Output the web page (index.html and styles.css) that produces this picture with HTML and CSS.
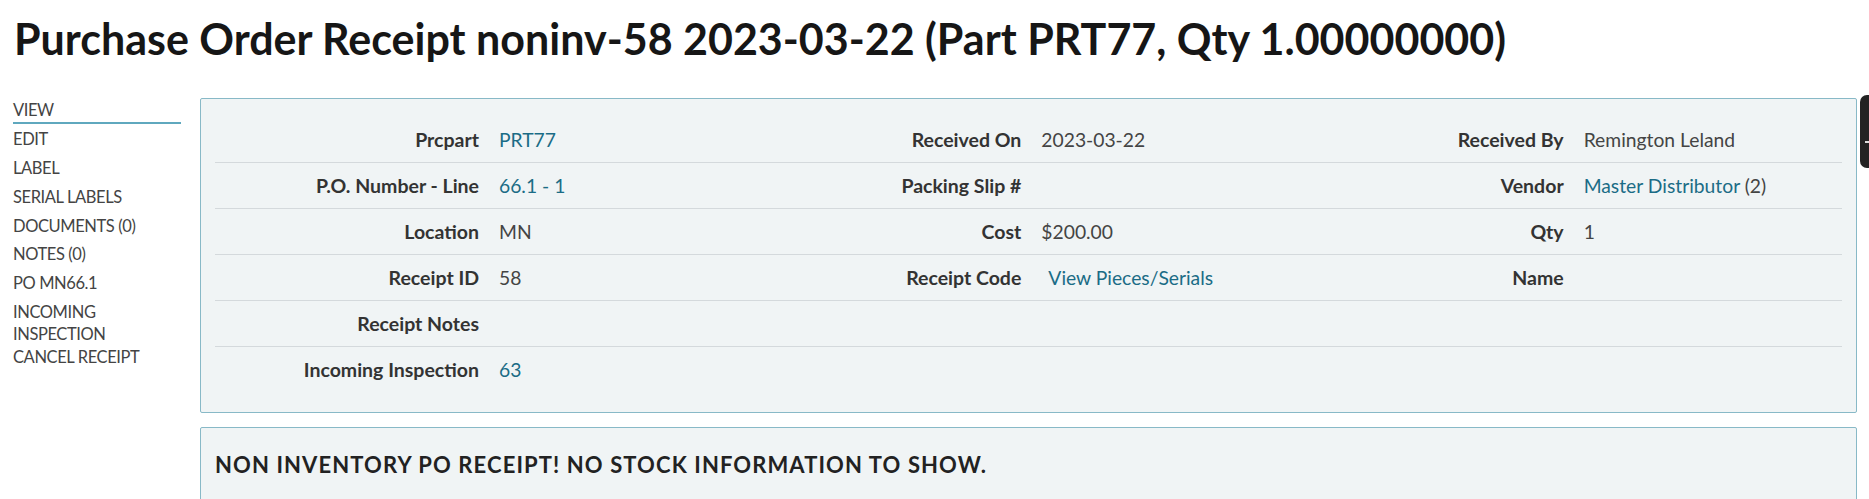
FILE: index.html
```html
<!DOCTYPE html>
<html lang="en">
<head>
    <meta charset="UTF-8">
    <title>Purchase Order Receipt noninv-58</title>
    <link rel="stylesheet" href="styles.css">
</head>
<body>
    <h1 class="page-title">Purchase Order Receipt noninv-58 2023-03-22 (Part PRT77, Qty 1.00000000)</h1>

    <div class="layout">
        <ul class="side-nav">
            <li class="active"><a href="#">View</a></li>
            <li><a href="#">Edit</a></li>
            <li><a href="#">Label</a></li>
            <li><a href="#">Serial Labels</a></li>
            <li><a href="#">Documents (0)</a></li>
            <li><a href="#">Notes (0)</a></li>
            <li><a href="#">PO MN66.1</a></li>
            <li class="wrap"><a href="#">Incoming Inspection</a></li>
            <li><a href="#">Cancel Receipt</a></li>
        </ul>

        <div class="content">
            <div class="panel">
                <table class="details">
                    <colgroup>
                        <col class="lbl"><col class="val">
                        <col class="lbl"><col class="val">
                        <col class="lbl"><col class="val">
                    </colgroup>
                    <tr>
                        <th>Prcpart</th><td><a href="#">PRT77</a></td>
                        <th>Received On</th><td>2023-03-22</td>
                        <th>Received By</th><td>Remington Leland</td>
                    </tr>
                    <tr>
                        <th>P.O. Number - Line</th><td><a href="#">66.1 - 1</a></td>
                        <th>Packing Slip #</th><td></td>
                        <th>Vendor</th><td><a href="#">Master Distributor</a> (2)</td>
                    </tr>
                    <tr>
                        <th>Location</th><td>MN</td>
                        <th>Cost</th><td>$200.00</td>
                        <th>Qty</th><td>1</td>
                    </tr>
                    <tr>
                        <th>Receipt ID</th><td>58</td>
                        <th>Receipt Code</th><td><a class="pieces" href="#">View Pieces/Serials</a></td>
                        <th>Name</th><td></td>
                    </tr>
                    <tr>
                        <th>Receipt Notes</th><td></td>
                        <th></th><td></td>
                        <th></th><td></td>
                    </tr>
                    <tr>
                        <th>Incoming Inspection</th><td><a href="#">63</a></td>
                        <th></th><td></td>
                        <th></th><td></td>
                    </tr>
                </table>
            </div>

            <div class="panel notice">
                <h3>Non Inventory PO Receipt! No stock information to show.</h3>
            </div>
        </div>
    </div>

    <div class="side-tab"><span></span></div>
</body>
</html>
```

FILE: styles.css
```css
body {
    font-family: 'Lato', 'Liberation Sans', sans-serif;
    color: #333;
    background: #fff;
    margin: 0;
    padding: 0 12px 0 13px;
    overflow: hidden;
}

a {
    color: #1b6c86;
    text-decoration: none;
}

.page-title {
    font-size: 43px;
    font-weight: 700;
    line-height: 52px;
    color: #161616;
    margin: 13px 0 33px 1px;
}

.layout {
    display: flex;
    align-items: flex-start;
}

/* left menu */
.side-nav {
    list-style: none;
    margin: 0;
    padding: 1px 0 0;
    width: 168px;
    flex-shrink: 0;
    margin-right: 19px;
}

.side-nav li {
    font-size: 16.5px;
    line-height: 22px;
    letter-spacing: -0.4px;
    text-transform: uppercase;
    padding-bottom: 1px;
    border-bottom: 2px solid transparent;
    margin-bottom: 3.9px;
}

.side-nav li a {
    color: #444;
}

.side-nav li.active {
    border-bottom-color: #5fa8be;
}

.side-nav li.wrap {
    width: 120px;
    margin-bottom: -2px;
}

.content {
    flex: 1;
}

.panel {
    background: #f0f4f5;
    border: 1px solid #88b9c7;
    border-radius: 2px;
    padding: 18px 14px 20px;
}

.details {
    width: 100%;
    border-collapse: collapse;
    table-layout: fixed;
}

.details col.lbl {
    width: 274px;
}

.details tr + tr th,
.details tr + tr td {
    border-top: 1px solid #d4d9dc;
}

.details th,
.details td {
    height: 45px;
    padding: 0 10px;
    vertical-align: middle;
}

.details th {
    text-align: right;
    font-size: 19.5px;
    font-weight: 700;
    color: #333;
}

.details td {
    text-align: left;
    font-size: 19.3px;
    color: #444;
}

.details .pieces {
    margin-left: 7px;
}

.notice {
    margin-top: 14px;
    padding-top: 17px;
}

.notice h3 {
    margin: 0;
    font-size: 22px;
    font-weight: 700;
    line-height: 40px;
    letter-spacing: 1.1px;
    text-transform: uppercase;
    color: #222;
}

/* dark tab stuck to right edge */
.side-tab {
    position: absolute;
    top: 95px;
    right: 0;
    width: 9px;
    height: 73px;
    background: #232323;
    border-radius: 7px 0 0 7px;
}

.side-tab span {
    position: absolute;
    top: 46px;
    left: 5px;
    width: 4px;
    height: 2px;
    background: #ddd;
}
```
